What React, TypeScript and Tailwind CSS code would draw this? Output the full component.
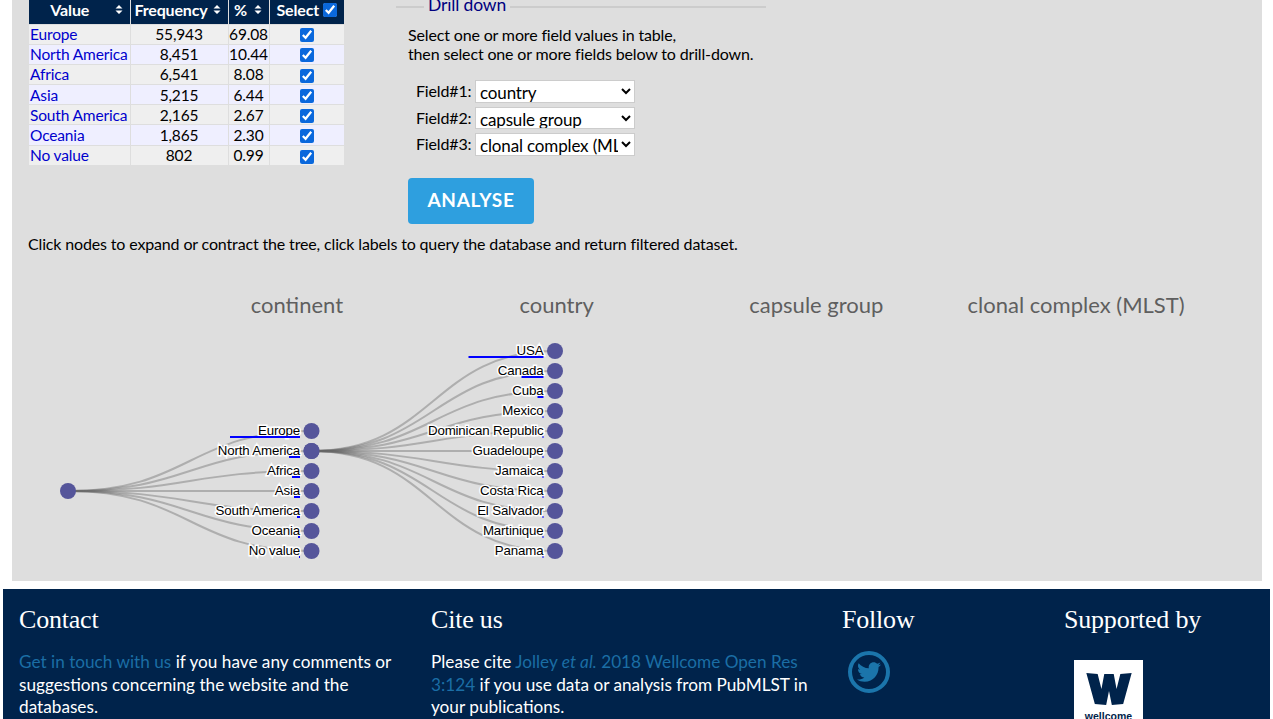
import { FaTwitter } from "react-icons/fa"

const rows = [
  { value: "Europe", frequency: "55,943", percent: "69.08" },
  { value: "North America", frequency: "8,451", percent: "10.44" },
  { value: "Africa", frequency: "6,541", percent: "8.08" },
  { value: "Asia", frequency: "5,215", percent: "6.44" },
  { value: "South America", frequency: "2,165", percent: "2.67" },
  { value: "Oceania", frequency: "1,865", percent: "2.30" },
  { value: "No value", frequency: "802", percent: "0.99" },
]

const continents = [
  { label: "Europe", bar: 70 },
  { label: "North America", bar: 11 },
  { label: "Africa", bar: 8 },
  { label: "Asia", bar: 6 },
  { label: "South America", bar: 3 },
  { label: "Oceania", bar: 2 },
  { label: "No value", bar: 1 },
]

const countries = [
  { label: "USA", bar: 75 },
  { label: "Canada", bar: 22 },
  { label: "Cuba", bar: 6 },
  { label: "Mexico", bar: 1 },
  { label: "Dominican Republic", bar: 1 },
  { label: "Guadeloupe", bar: 1 },
  { label: "Jamaica", bar: 1 },
  { label: "Costa Rica", bar: 1 },
  { label: "El Salvador", bar: 1 },
  { label: "Martinique", bar: 1 },
  { label: "Panama", bar: 1 },
]

const fields = [
  { label: "Field#1:", selected: "country" },
  { label: "Field#2:", selected: "capsule group" },
  { label: "Field#3:", selected: "clonal complex (MLST)" },
]

const SortArrows = () => (
  <svg width="8" height="9" viewBox="0 0 8 9" className="absolute right-[7px] top-[5px]">
    <path d="M4 0 L7.5 3.5 H0.5 Z M4 9 L0.5 5.5 H7.5 Z" fill="#fff" />
  </svg>
)

const TreeBranch = ({
  fromX,
  fromY,
  toX,
  top,
  items,
}: {
  fromX: number
  fromY: number
  toX: number
  top: number
  items: { label: string; bar: number }[]
}) => {
  const midX = (fromX + toX) / 2
  const labelEnd = toX - 11.5
  return (
    <g>
      {items.map((item, i) => {
        const y = top + i * 20
        return (
          <path
            key={item.label}
            d={`M${fromX} ${fromY} C${midX} ${fromY} ${midX} ${y} ${toX} ${y}`}
            fill="none"
            stroke="#666"
            strokeOpacity="0.4"
            strokeWidth="2"
          />
        )
      })}
      {items.map((item, i) => {
        const y = top + i * 20
        return (
          <g key={item.label}>
            <text
              x={labelEnd}
              y={y + 4}
              textAnchor="end"
              fontFamily="'Liberation Sans', Arial, sans-serif"
              fontSize="13.3"
              fill="#000"
              stroke="#fff"
              strokeWidth="3"
              paintOrder="stroke"
            >
              {item.label}
            </text>
            <rect x={labelEnd - item.bar} y={y + 5} width={item.bar} height="2" fill="#0000ff" />
            <circle cx={toX} cy={y} r="8" fill="#55559a" />
          </g>
        )
      })}
    </g>
  )
}

export default function App() {
  return (
    <div className="h-[719px] overflow-hidden bg-white font-['Lato',sans-serif] text-[16px] tracking-[-0.15px] text-black">
      <main className="ml-3 h-[581px] w-[1250px] overflow-hidden bg-[#dedede]">
        <div className="flex">
          <table className="ml-[17px] h-fit w-[315px] table-fixed border-collapse text-[15.5px] leading-[18px]">
            <colgroup>
              <col className="w-[101px]" />
              <col className="w-[98px]" />
              <col className="w-[41px]" />
              <col className="w-[75px]" />
            </colgroup>
            <thead>
              <tr className="h-[24px] bg-[#00234b] text-[16px] text-white">
                <th className="relative border-r border-[#dedede] pb-[3px] pr-[19px] font-bold">Value<SortArrows /></th>
                <th className="relative border-r border-[#dedede] pb-[3px] pr-4 font-bold">Frequency<SortArrows /></th>
                <th className="relative border-r border-[#dedede] pb-[3px] pr-4 font-bold">%<SortArrows /></th>
                <th className="pb-[3px] font-bold">
                  <span className="inline-flex items-center gap-[4px]">
                    Select
                    <input type="checkbox" defaultChecked className="size-[14px] accent-[#0a68dc]" />
                  </span>
                </th>
              </tr>
            </thead>
            <tbody>
              {rows.map((row, i) => (
                <tr
                  key={row.value}
                  className={`h-[20.2px] border-t border-[#dedede] ${i % 2 === 0 ? "bg-[#efefef]" : "bg-[#efefff]"}`}
                >
                  <td className="overflow-hidden whitespace-nowrap border-r border-[#dedede] pl-px text-[#0000cd]">{row.value}</td>
                  <td className="border-r border-[#dedede] text-center">{row.frequency}</td>
                  <td className="border-r border-[#dedede] text-center">{row.percent}</td>
                  <td className="text-center leading-none">
                    <input type="checkbox" defaultChecked className="size-[14px] align-middle accent-[#0a68dc]" />
                  </td>
                </tr>
              ))}
            </tbody>
          </table>

          <fieldset className="-mt-[5px] ml-[52px] w-[370px] border-t-2 border-[#cccccc] pl-3">
            <legend className="ml-[16px] px-1 pb-[4px] text-[17.5px] leading-[20px] text-[#000080]">Drill down</legend>
            <p className="mt-[6px] whitespace-nowrap leading-[19px]">
              Select one or more field values in table,
              <br />
              then select one or more fields below to drill-down.
            </p>
            <div className="mt-[17px] flex flex-col gap-[4px] pl-2">
              {fields.map((field) => (
                <label key={field.label} className="flex h-[22.5px] items-center gap-[3px]">
                  <span className="w-[56px] whitespace-nowrap">{field.label}</span>
                  <select
                    defaultValue={field.selected}
                    className="h-[22.5px] w-[160px] border border-[#cccccc] bg-white text-[17px] leading-[20px]"
                  >
                    <option>{field.selected}</option>
                  </select>
                </label>
              ))}
            </div>
            <button
              type="button"
              className="mt-[22px] h-[46px] w-[126px] rounded bg-[#2e9fdf] text-[19px] font-bold tracking-[0.7px] text-white"
            >
              ANALYSE
            </button>
          </fieldset>
        </div>

        <p className="ml-4 mt-[10px] leading-[20px]">
          Click nodes to expand or contract the tree, click labels to query the database and return filtered dataset.
        </p>

        <div className="mt-[37px] ml-[155px] grid w-[1039px] grid-cols-4 text-center text-[22px] leading-[28px] tracking-normal text-[#5f5f5f]">
          <span>continent</span>
          <span>country</span>
          <span>capsule group</span>
          <span>clonal complex (MLST)</span>
        </div>

        <svg width="600" height="240" viewBox="12 332 600 240" className="mt-[13px] block">
          <TreeBranch fromX={68} fromY={491} toX={311.5} top={431} items={continents} />
          <TreeBranch fromX={311.5} fromY={451} toX={555} top={351} items={countries} />
          <circle cx="68" cy="491" r="8" fill="#55559a" />
          <circle cx="311.5" cy="451" r="8" fill="#55559a" />
        </svg>
      </main>

      <footer className="ml-[3px] mt-2 grid h-[200px] w-[1267px] grid-cols-[412px_411px_222px_1fr] bg-[#00234b] pl-4 pt-[15px] text-[17.2px] leading-[22.5px] tracking-normal text-white">
        <section>
          <h2 className="font-['Liberation_Serif',serif] text-[26px] leading-[32px] tracking-[-0.2px]">Contact</h2>
          <p className="mt-[15px] w-[385px]">
            <a className="text-[#1b6ea5]">Get in touch with us</a> if you have any comments or suggestions concerning the website and the databases.
          </p>
        </section>
        <section>
          <h2 className="font-['Liberation_Serif',serif] text-[26px] leading-[32px] tracking-[-0.2px]">Cite us</h2>
          <p className="mt-[15px] w-[385px]">
            Please cite <a className="text-[#1b6ea5]">Jolley <em>et al.</em> 2018 Wellcome Open Res 3:124</a> if you use data or analysis from PubMLST in your publications.
          </p>
        </section>
        <section>
          <h2 className="font-['Liberation_Serif',serif] text-[26px] leading-[32px] tracking-[-0.2px]">Follow</h2>
          <a className="ml-[6px] mt-[15px] flex size-[42px] items-center justify-center rounded-full border-[4px] border-[#1b75ab] text-[#1b75ab]">
            <FaTwitter size={24} />
          </a>
        </section>
        <section>
          <h2 className="font-['Liberation_Serif',serif] text-[26px] leading-[32px] tracking-[-0.2px]">Supported by</h2>
          <div className="ml-[10px] mt-[24px] flex h-[80px] w-[69px] flex-col items-center bg-white pt-[12px]">
            <svg width="48" height="34" viewBox="0 0 48 36">
              <path d="M0 1 L12 2 L16 18 L19 2 L29 2 L32 18 L36 2 L48 1 L39 34 L27 35 L24 20 L21 35 L9 34 Z" fill="#00234b" />
            </svg>
            <span className="mt-[5px] font-['Liberation_Sans',sans-serif] text-[10.5px] font-bold leading-none text-[#00234b]">wellcome</span>
          </div>
        </section>
      </footer>
    </div>
  )
}
